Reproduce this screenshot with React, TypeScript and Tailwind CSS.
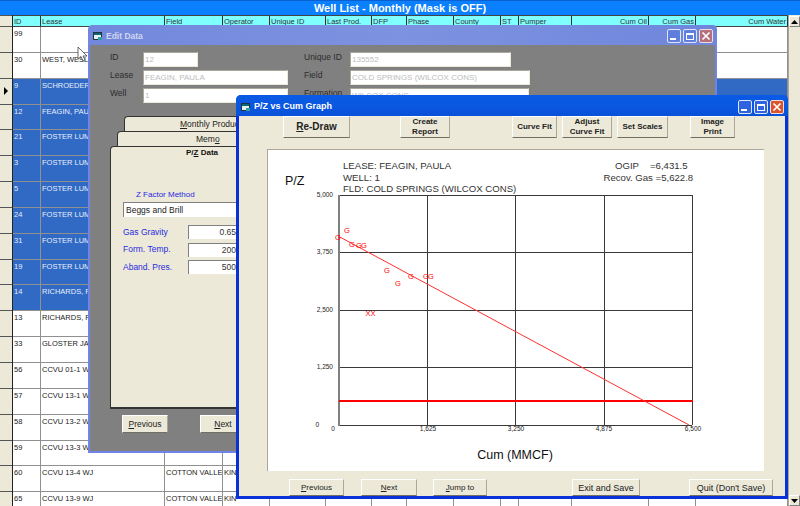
import React from 'react';

const COLS = 'grid grid-cols-[28px_124px_58px_47px_56px_46px_35px_47px_47px_18px_53px_77px_47px_92px]';
const HEADERS = ['ID', 'Lease', 'Field', 'Operator', 'Unique ID', 'Last Prod.', 'DFP', 'Phase', 'County', 'ST', 'Pumper', 'Cum Oil', 'Cum Gas', 'Cum Water'];

type Row = { id: string; lease: string; field?: string; op?: string; sel?: boolean };

const ROWS: Row[] = [
  { id: '99', lease: '' },
  { id: '30', lease: 'WEST, WESL' },
  { id: '9', lease: 'SCHROEDER,', sel: true },
  { id: '12', lease: 'FEAGIN, PAU', sel: true },
  { id: '21', lease: 'FOSTER LUM', sel: true },
  { id: '3', lease: 'FOSTER LUM', sel: true },
  { id: '5', lease: 'FOSTER LUM', sel: true },
  { id: '24', lease: 'FOSTER LUM', sel: true },
  { id: '31', lease: 'FOSTER LUM', sel: true },
  { id: '19', lease: 'FOSTER LUM', sel: true },
  { id: '14', lease: 'RICHARDS, F', sel: true },
  { id: '13', lease: 'RICHARDS, F' },
  { id: '33', lease: 'GLOSTER JA' },
  { id: '56', lease: 'CCVU 01-1 W' },
  { id: '57', lease: 'CCVU 13-1 W' },
  { id: '58', lease: 'CCVU 13-2 W' },
  { id: '59', lease: 'CCVU 13-3 W' },
  { id: '60', lease: 'CCVU 13-4 WJ', field: 'COTTON VALLE', op: 'KIN' },
  { id: '65', lease: 'CCVU 13-9 WJ', field: 'COTTON VALLE', op: 'KIN' },
];

const POINTS: [number, number][] = [
  [347, 230], [338, 237], [352, 244], [359, 245], [364, 245], [387, 270],
  [398, 283], [411, 276], [426, 276], [431, 276],
];

// ─── XP caption buttons ───
const CaptionButtons: React.FC<{ faded?: boolean }> = ({ faded }) => {
  const base = `w-[14px] h-[14px] rounded-[2px] border border-[#dfe6fb] flex items-center justify-center ${faded ? 'bg-[#5f7fdc]' : 'bg-[#2f63e0]'}`;
  return (
    <div className="flex gap-[2px]">
      <div className={base}>
        <div className="w-[6px] h-[2px] bg-white mt-[6px] mr-[2px]" />
      </div>
      <div className={base}>
        <div className="w-[8px] h-[7px] border border-white border-t-2" />
      </div>
      <div className={`w-[14px] h-[14px] rounded-[2px] border border-[#f0dcd8] flex items-center justify-center ${faded ? 'bg-[#b5707f]' : 'bg-[#d9552f]'}`}>
        <svg width="10" height="10" viewBox="0 0 10 10">
          <path d="M1.5 1.5 L8.5 8.5 M8.5 1.5 L1.5 8.5" stroke="white" strokeWidth="1.7" />
        </svg>
      </div>
    </div>
  );
};

const WinIcon: React.FC = () => (
  <svg width="10" height="10" viewBox="0 0 10 10" className="shrink-0">
    <rect x="0.5" y="1.5" width="8" height="7" fill="#e8f0f0" stroke="#203040" />
    <rect x="1" y="2" width="7" height="2" fill="#0a6a70" />
    <rect x="5" y="6" width="4" height="3" fill="#30a0a0" />
  </svg>
);

const Btn: React.FC<{ className?: string; children: React.ReactNode }> = ({ className, children }) => (
  <button className={`bg-[#ece9d8] border border-t-white border-l-white border-r-[#aca899] border-b-[#716f64] text-[#222] flex items-center justify-center text-center leading-[10px] shrink-0 ${className ?? ''}`}>
    {children}
  </button>
);

const Field: React.FC<{ label: string; value: string; labelW: string; className: string }> = ({ label, value, labelW, className }) => (
  <div className="flex items-center h-[15px]">
    <span className={`text-[8.5px] text-[#2c2c2c] pb-[4px] ${labelW}`}>{label}</span>
    <div className={`h-[15px] bg-white border border-[#ece9d8] border-t-[#aca899] border-l-[#aca899] text-[8px] text-[#bdbdbd] pl-[1px] leading-[13px] overflow-hidden whitespace-nowrap ${className}`}>
      {value}
    </div>
  </div>
);

const NumRow: React.FC<{ label: string; value: string }> = ({ label, value }) => (
  <div className="flex items-center h-[14px]">
    <span className="w-[65px] text-[8.5px] text-[#2a2ae0]">{label}</span>
    <div className="w-[60px] h-[14px] bg-white border-t border-l border-[#808080] text-[8.5px] text-[#333] leading-[13px] text-right pr-[12px]">
      {value}
    </div>
  </div>
);

const EditWindow: React.FC = () => (
  <div className="absolute left-[88px] top-[25px] w-[629px] h-[428px] flex flex-col rounded-t-[5px] border-x-[2px] border-b-[2px] border-[#6f84e6] bg-[#808080]">
    <div className="h-[20px] -mx-[2px] rounded-t-[5px] bg-gradient-to-r from-[#7288dc] via-[#7d92e0] to-[#6f86dc] flex items-center pl-[5px] pr-[4px] pt-[2px] gap-[3px] shrink-0">
      <WinIcon />
      <span className="flex-1 text-[8.5px] font-bold text-[#cfd6ee]">Edit Data</span>
      <CaptionButtons faded />
    </div>
    <div className="pl-[20px] pt-[7px] flex gap-[0px]">
      <div className="w-[194px] flex flex-col gap-[3px]">
        <Field label="ID" value="12" labelW="w-[33px]" className="w-[55px]" />
        <Field label="Lease" value="FEAGIN, PAULA" labelW="w-[33px]" className="w-[145px]" />
        <Field label="Well" value="1" labelW="w-[33px]" className="w-[145px]" />
      </div>
      <div className="flex flex-col gap-[3px]">
        <Field label="Unique ID" value="135552" labelW="w-[46px]" className="w-[161px]" />
        <Field label="Field" value="COLD SPRINGS (WILCOX CONS)" labelW="w-[46px]" className="w-[180px]" />
        <Field label="Formation" value="WILCOX CONS" labelW="w-[46px]" className="w-[179px]" />
      </div>
    </div>
    <div className="pl-[20px] mt-[13px] flex flex-col flex-1">
      <div className="ml-[14px] w-[570px] h-[15px] bg-[#ece9d8] border border-b-0 border-[#333] rounded-t-[4px] text-[8.5px] text-[#222] pl-[55px] leading-[14px]">
        <u>M</u>onthly Production
      </div>
      <div className="ml-[7px] w-[577px] h-[15px] bg-[#ece9d8] border border-b-0 border-[#333] rounded-t-[4px] text-[8.5px] text-[#222] pl-[78px] leading-[14px]">
        Mem<u>o</u>
      </div>
      <div className="w-[584px] h-[263px] bg-[#ece9d8] border border-b-2 border-[#333] rounded-t-[4px] pl-[12px]">
        <div className="text-[8px] font-bold text-[#111] pl-[63px] leading-[11px] mt-[0px]">
          P/<u>Z</u> Data
        </div>
        <div className="text-[8px] text-[#2a2ae0] pl-[13px] mt-[32px] leading-[10px]">Z Factor Method</div>
        <div className="w-[150px] h-[15px] mt-[2px] bg-white border-t border-l border-[#808080] text-[8.5px] text-[#222] pl-[2px] leading-[14px]">
          Beggs and Brill
        </div>
        <div className="flex flex-col gap-[3.5px] mt-[8px]">
          <NumRow label="Gas Gravity" value="0.65" />
          <NumRow label="Form. Temp." value="200" />
          <NumRow label="Aband. Pres." value="500" />
        </div>
      </div>
      <div className="flex mt-[6px] ml-[12px] gap-[32px]">
        <Btn className="w-[46px] h-[18px] text-[8.5px]"><span><u>P</u>revious</span></Btn>
        <Btn className="w-[46px] h-[18px] text-[8.5px]"><span><u>N</u>ext</span></Btn>
      </div>
    </div>
  </div>
);

const Chart: React.FC = () => {
  const vLines = [427, 515, 604, 692];
  const hLines = [195, 252, 310, 367, 425];
  return (
    <svg width="496" height="321" viewBox="268 150 496 321" className="block" fontFamily="'Liberation Sans', sans-serif">
      {vLines.map(x => <line key={x} x1={x + 0.5} x2={x + 0.5} y1="195" y2="425" stroke="#3a3a3a" />)}
      {hLines.map(y => <line key={y} x1="339" x2="692" y1={y + 0.5} y2={y + 0.5} stroke="#3a3a3a" />)}
      <line x1="339" x2="339" y1="195" y2="426" stroke="#808080" strokeWidth="2" />
      <line x1="339" x2="693" y1="401" y2="401" stroke="#ff0000" strokeWidth="2" />
      <line x1="338" y1="236" x2="689" y2="425" stroke="#ff3030" strokeWidth="1" />
      <g fill="#ff0000" fontSize="7.5" textAnchor="middle">
        {POINTS.map(([x, y]) => <text key={`${x}-${y}`} x={x} y={y + 3}>G</text>)}
        <text x="368" y="316">X</text>
        <text x="373" y="316">X</text>
      </g>
      <g fill="#333" fontSize="9.6">
        <text x="343" y="169">LEASE: FEAGIN, PAULA</text>
        <text x="343" y="181">WELL: 1</text>
        <text x="343" y="192">FLD: COLD SPRINGS (WILCOX CONS)</text>
        <text x="615" y="169">OGIP</text>
        <text x="650" y="169">=6,431.5</text>
        <text x="603.5" y="181">Recov. Gas =5,622.8</text>
      </g>
      <text x="285" y="185" fontSize="12.5" fill="#111">P/Z</text>
      <g fill="#222" fontSize="6.5" textAnchor="end">
        <text x="333" y="197">5,000</text>
        <text x="333" y="254">3,750</text>
        <text x="333" y="312">2,500</text>
        <text x="333" y="369">1,250</text>
        <text x="319" y="427">0</text>
      </g>
      <g fill="#222" fontSize="6.5" textAnchor="middle">
        <text x="333" y="431">0</text>
        <text x="428" y="431">1,625</text>
        <text x="516" y="431">3,250</text>
        <text x="604" y="431">4,875</text>
        <text x="693" y="431">6,500</text>
      </g>
      <text x="515" y="459" fontSize="12.5" fill="#111" textAnchor="middle">Cum (MMCF)</text>
    </svg>
  );
};

const GraphWindow: React.FC = () => (
  <div className="absolute left-[236px] top-[95px] w-[552px] h-[404px] flex flex-col rounded-t-[5px] border-x-[3px] border-b-[3px] border-[#0831d9] bg-[#ece9d8]">
    <div className="h-[21px] -mx-[3px] rounded-t-[5px] bg-gradient-to-b from-[#0a5ae6] via-[#0a58e0] to-[#0a50d8] flex items-center pl-[5px] pr-[4px] pt-[3px] gap-[3px] shrink-0">
      <WinIcon />
      <span className="flex-1 text-[9px] font-bold text-white">P/Z vs Cum Graph</span>
      <CaptionButtons />
    </div>
    <div className="flex h-[22px] shrink-0 font-bold text-[8px]">
      <Btn className="ml-[44px] w-[67px] h-[22px] text-[10px]"><span><u>R</u>e-Draw</span></Btn>
      <Btn className="ml-[50px] w-[50px] h-[22px]">Create<br />Report</Btn>
      <Btn className="ml-[62px] w-[45px] h-[22px]">Curve Fit</Btn>
      <Btn className="ml-[5px] w-[50px] h-[22px]">Adjust<br />Curve Fit</Btn>
      <Btn className="ml-[5px] w-[51px] h-[22px]">Set Scales</Btn>
      <Btn className="ml-[22px] w-[45px] h-[22px]">Image<br />Print</Btn>
    </div>
    <div className="ml-[28px] mt-[11px] w-[497px] h-[322px] bg-white border-t border-l border-[#aca899] shrink-0 overflow-hidden">
      <Chart />
    </div>
    <div className="flex mt-[8px] text-[8px]">
      <Btn className="ml-[50px] w-[55px] h-[17px]"><span><u>P</u>revious</span></Btn>
      <Btn className="ml-[17px] w-[56px] h-[17px]"><span><u>N</u>ext</span></Btn>
      <Btn className="ml-[16px] w-[54px] h-[17px]"><span><u>J</u>ump to</span></Btn>
      <Btn className="ml-[85px] w-[68px] h-[17px] text-[9px]">Exit and Save</Btn>
      <Btn className="ml-[49px] w-[84px] h-[17px] text-[9px]">Quit (Don't Save)</Btn>
    </div>
  </div>
);

export default function App() {
  return (
    <div className="relative w-[800px] h-[506px] overflow-hidden bg-white font-['Liberation_Sans',sans-serif]">
      <div className="h-[15px] bg-[#0a80ff] text-white font-bold text-[11px] leading-[15px] text-center border-t border-[#0a60d0]">
        Well List - Monthly (Mask is OFF)
      </div>
      <div className="flex">
        {/* row selector column */}
        <div className="w-[13px] shrink-0 border-r border-[#222]">
          <div className="h-[12px] bg-[#ece9d8] border-y border-[#555]" />
          {ROWS.map((r, i) => (
            <div key={r.id} className="h-[25.85px] bg-[#ece9d8] border-b border-[#555] flex items-center justify-center">
              {i === 2 && (
                <svg width="6" height="8" viewBox="0 0 6 8"><path d="M1 0 L5 4 L1 8 Z" fill="#000" /></svg>
              )}
            </div>
          ))}
        </div>
        <div className="w-[775px] shrink-0">
          <div className={`${COLS} h-[12px] bg-[#80ffff] border-y border-[#444]`}>
            {HEADERS.map((h, i) => (
              <div key={h} className={`text-[7.5px] text-[#333] leading-[12px] px-[1px] border-r border-[#333] whitespace-nowrap overflow-hidden ${i >= 11 ? 'text-right' : ''}`}>
                {h}
              </div>
            ))}
          </div>
          {ROWS.map(r => (
            <div key={r.id} className={`${COLS} h-[25.85px] border-b border-[#909090] text-[7.5px] leading-[10px] ${r.sel ? 'bg-[#316ac5] text-[#e8eefa]' : 'bg-white text-[#222]'}`}>
              {HEADERS.map((h, i) => (
                <div key={h} className="border-r border-[#909090] px-[1px] pt-[2px] whitespace-nowrap overflow-hidden">
                  {i === 0 ? r.id : i === 1 ? r.lease : i === 2 ? r.field : i === 3 ? r.op : ''}
                </div>
              ))}
            </div>
          ))}
        </div>
        {/* scrollbar */}
        <div className="w-[12px] shrink-0 h-[491px] bg-[#ece9d8] border-l border-[#aca899] flex flex-col justify-between">
          <div className="h-[11px] mt-[1px] flex items-center justify-center border border-t-white border-l-white border-r-[#808080] border-b-[#808080]">
            <svg width="7" height="4" viewBox="0 0 7 4"><path d="M3.5 0 L7 4 L0 4 Z" fill="#000" /></svg>
          </div>
          <div className="h-[11px] flex items-center justify-center border border-t-white border-l-white border-r-[#808080] border-b-[#808080]">
            <svg width="7" height="4" viewBox="0 0 7 4"><path d="M0 0 L7 0 L3.5 4 Z" fill="#000" /></svg>
          </div>
        </div>
      </div>

      <EditWindow />
      <GraphWindow />

      {/* mouse cursor */}
      <svg width="12" height="17" viewBox="0 0 12 17" className="absolute left-[77px] top-[46px]">
        <path d="M1 1 L1 13 L4 10.5 L6 15 L8 14 L6 10 L10 10 Z" fill="#fff" stroke="#444" strokeWidth="0.8" />
      </svg>
    </div>
  );
}
